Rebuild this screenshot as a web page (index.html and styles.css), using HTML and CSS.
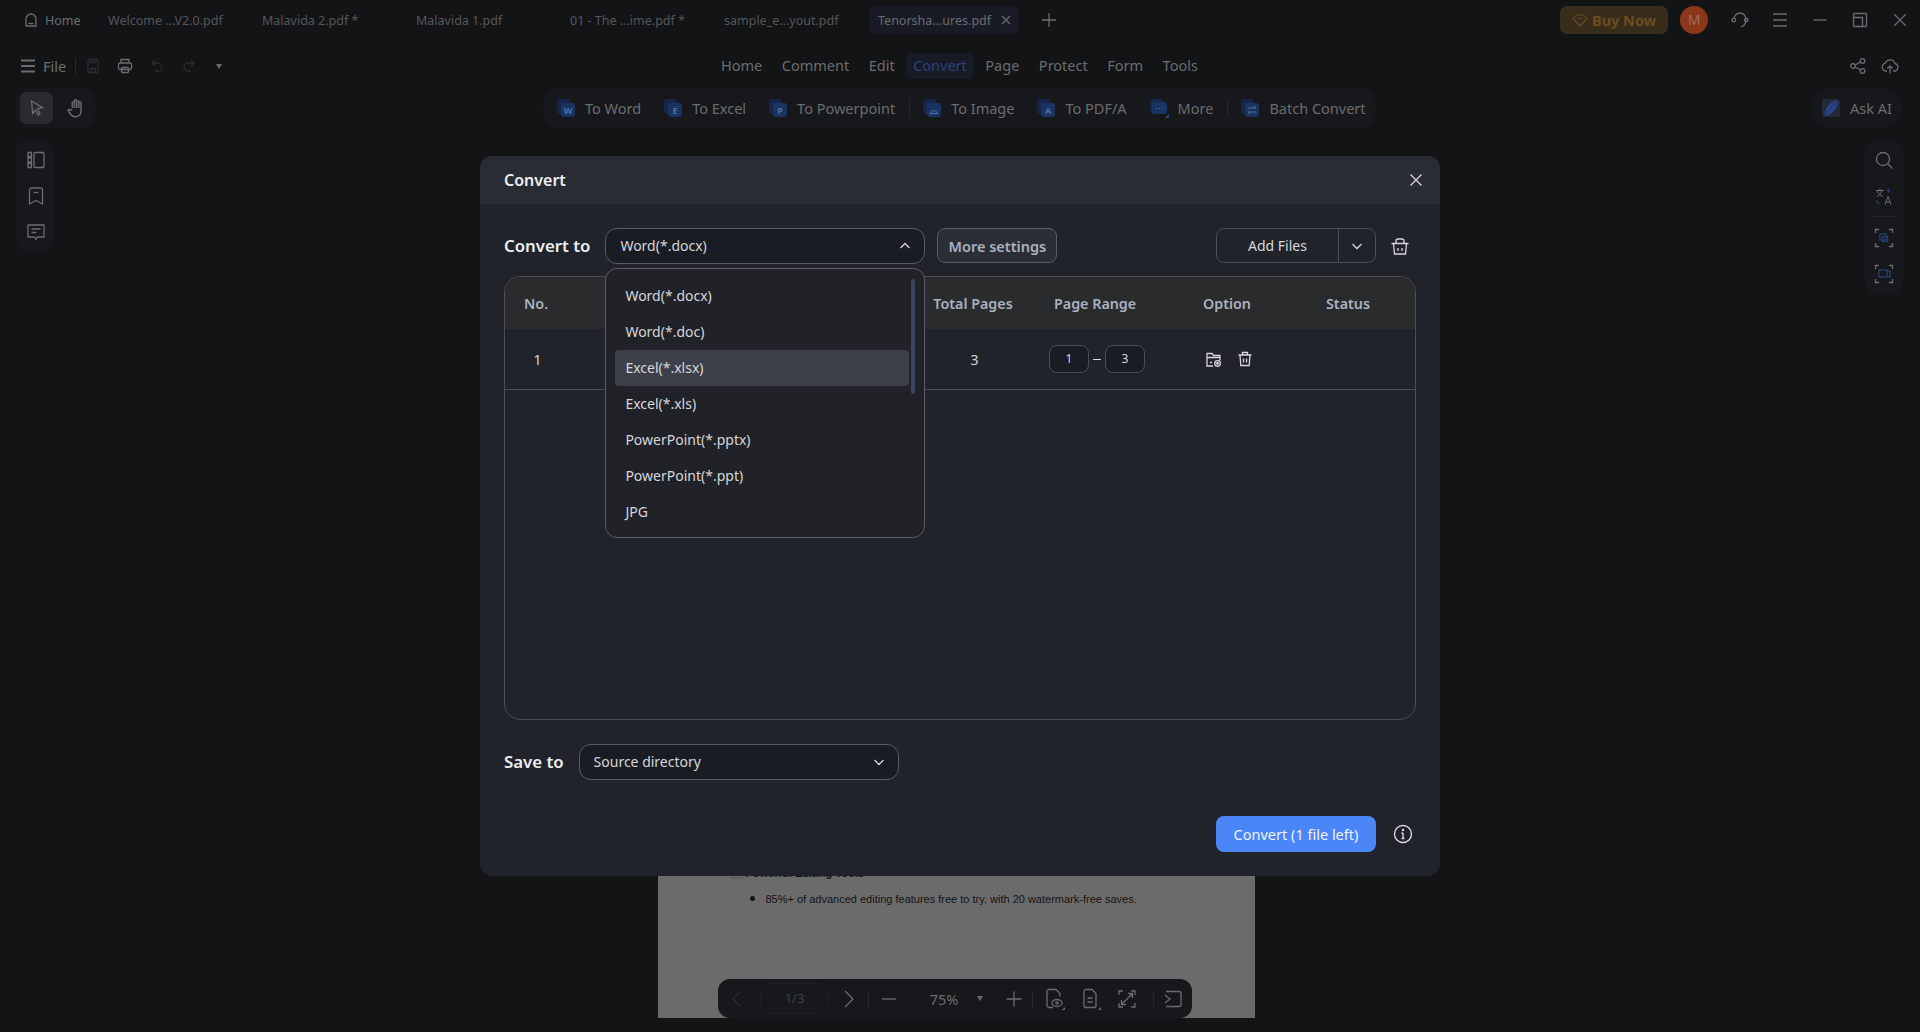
FILE: index.html
```html
<!DOCTYPE html>
<html lang="en">
<head>
  <meta charset="UTF-8">
  <title>Convert - PDNob</title>
  <link rel="stylesheet" href="styles.css">
</head>
<body>
  <!-- tab strip -->
  <div class="tabbar">
    <div class="tab tab-home">
      <svg class="ico" width="16" height="16" viewBox="0 0 16 16"><path d="M3 14V7a5 5 0 0 1 10 0v7z"/><path d="M5.500 11.500h5"/></svg>
      <span>Home</span>
    </div>
    <div class="tab tab-file">Welcome ...V2.0.pdf</div>
    <div class="tab tab-file">Malavida 2.pdf *</div>
    <div class="tab tab-file">Malavida 1.pdf</div>
    <div class="tab tab-file">01 - The ...ime.pdf *</div>
    <div class="tab tab-file tab-short">sample_e...yout.pdf</div>
    <div class="tab tab-active">
      <span>Tenorsha...ures.pdf</span>
      <svg class="ico" width="10" height="10" viewBox="0 0 10 10"><path d="M1 1l8 8M9 1l-8 8"/></svg>
    </div>
    <svg class="ico tab-add" width="16" height="16" viewBox="0 0 16 16"><path d="M8 1v14M1 8h14"/></svg>

    <div class="win-tools">
      <div class="buy-btn">
        <svg width="16" height="16" viewBox="0 0 16 16" fill="none" stroke="#6b4c23" stroke-width="1.200"><path d="M4.500 3h7L15 6.500 8 14 1 6.500z"/><path d="M6 6.500h4"/></svg>
        <span>Buy Now</span>
      </div>
      <div class="avatar">M</div>
      <svg class="ico win-ico" width="20" height="20" viewBox="0 0 20 20"><path d="M4 9a6 6 0 0 1 12 0c0 4-1.500 7-5 8"/><circle cx="3.800" cy="10" r="1.800"/><circle cx="16.200" cy="10" r="1.800"/></svg>
      <svg class="ico win-ico" width="20" height="20" viewBox="0 0 20 20"><path d="M3 4h14M3 10h14M3 16h14"/></svg>
      <svg class="ico win-ico" width="20" height="20" viewBox="0 0 20 20"><path d="M3.500 10h13"/></svg>
      <svg class="ico win-ico" width="20" height="20" viewBox="0 0 20 20"><rect x="3.500" y="3.500" width="13" height="13" rx="1"/><path d="M3.500 7.500h9v9"/></svg>
      <svg class="ico win-ico" width="20" height="20" viewBox="0 0 20 20"><path d="M4 4l12 12M16 4L4 16"/></svg>
    </div>
  </div>

  <!-- menu row -->
  <div class="menubar">
    <div class="file-tools">
      <svg class="ico ico-thick" width="16" height="16" viewBox="0 0 16 16"><path d="M1 2.500h14M1 8h14M1 13.500h14"/></svg>
      <span class="file-label">File</span>
      <i class="vline"></i>
      <svg class="ico ico-off" width="16" height="16" viewBox="0 0 16 16"><rect x="3" y="1.500" width="10" height="13" rx="1.500"/><path d="M5.500 1.500v3h5v-3M5.500 14.500v-4h5v4"/></svg>
      <svg class="ico" width="16" height="16" viewBox="0 0 16 16"><path d="M4 5V1.500h8V5"/><rect x="1.500" y="5" width="13" height="6.500" rx="1.500"/><rect x="4.500" y="9.500" width="7" height="5" rx="1"/></svg>
      <svg class="ico ico-off" width="16" height="16" viewBox="0 0 16 16"><path d="M6 2L3 5l3 3M3 5h6a4 4 0 0 1 0 8H6"/></svg>
      <svg class="ico ico-off" width="16" height="16" viewBox="0 0 16 16"><path d="M10 2l3 3-3 3M13 5H7a4 4 0 0 0 0 8h3"/></svg>
      <span class="caret"></span>
    </div>
    <nav class="main-nav">
      <a>Home</a>
      <a>Comment</a>
      <a>Edit</a>
      <a class="current">Convert</a>
      <a>Page</a>
      <a>Protect</a>
      <a>Form</a>
      <a>Tools</a>
    </nav>
    <div class="share-tools">
      <svg class="ico" width="18" height="18" viewBox="0 0 18 18"><circle cx="4" cy="9" r="2.300"/><circle cx="13.500" cy="4" r="2.300"/><circle cx="13.500" cy="14" r="2.300"/><path d="M6 8l5.500-3M6 10l5.500 3"/></svg>
      <svg class="ico" width="18" height="18" viewBox="0 0 18 18"><path d="M6 14H5a4 4 0 0 1-.6-7.900 5 5 0 0 1 9.500.4A3.800 3.800 0 0 1 13 14h-1"/><path d="M9 16.500V9M6.300 11.500L9 8.800l2.700 2.700"/></svg>
    </div>
  </div>

  <!-- tool row -->
  <div class="toolrow">
    <div class="pointer-tools">
      <div class="tool-btn active">
        <svg class="ico" width="18" height="18" viewBox="0 0 18 18"><path d="M3.500 2l11 6.500-4.800 1.300L12 15l-1.800 1-2.500-5-3 3.500z"/></svg>
      </div>
      <div class="tool-btn">
        <svg class="ico" width="22" height="22" viewBox="-1.500 0 20 20"><path d="M6 10V5.500a1 1 0 0 1 2 0V3.500a1 1 0 0 1 2 0v1a1 1 0 0 1 2 0v1a1 1 0 0 1 2 0V13a5 5 0 0 1-5 5c-3 0-4-1.500-7-6 .8-1 2-1 4 0M8 5.500V10M10 4v6M12 4.500V10"/></svg>
      </div>
    </div>

    <div class="convert-tools">
      <div class="conv-item">
        <svg class="doc-ico" width="20" height="20" viewBox="0 0 20 20"><rect x="1" y="1" width="13" height="15" rx="3" fill="#15264a"/><rect x="5" y="5" width="14" height="14" rx="3" fill="#1a3461"/><text x="12" y="16" class="doc-letter">W</text></svg>
        <span>To Word</span>
      </div>
      <div class="conv-item">
        <svg class="doc-ico" width="20" height="20" viewBox="0 0 20 20"><rect x="1" y="1" width="13" height="15" rx="3" fill="#15264a"/><rect x="5" y="5" width="14" height="14" rx="3" fill="#1a3461"/><text x="12" y="16" class="doc-letter">E</text></svg>
        <span>To Excel</span>
      </div>
      <div class="conv-item">
        <svg class="doc-ico" width="20" height="20" viewBox="0 0 20 20"><rect x="1" y="1" width="13" height="15" rx="3" fill="#15264a"/><rect x="5" y="5" width="14" height="14" rx="3" fill="#1a3461"/><text x="12" y="16" class="doc-letter">P</text></svg>
        <span>To Powerpoint</span>
      </div>
      <i class="vline"></i>
      <div class="conv-item">
        <svg class="doc-ico" width="20" height="20" viewBox="0 0 20 20"><rect x="1" y="1" width="13" height="15" rx="3" fill="#15264a"/><rect x="5" y="5" width="14" height="14" rx="3" fill="#1a3461"/><path d="M7.500 15.500h9M9 15.500a3 3 0 0 1 6 0" fill="none" stroke="#4f6da3" stroke-width="1"/></svg>
        <span>To Image</span>
      </div>
      <div class="conv-item">
        <svg class="doc-ico" width="20" height="20" viewBox="0 0 20 20"><rect x="1" y="1" width="13" height="15" rx="3" fill="#15264a"/><rect x="5" y="5" width="14" height="14" rx="3" fill="#1a3461"/><text x="12" y="16" class="doc-letter">A</text></svg>
        <span>To PDF/A</span>
      </div>
      <div class="conv-item">
        <svg class="doc-ico" width="20" height="20" viewBox="0 0 20 20"><rect x="1" y="1" width="13" height="15" rx="3" fill="#15264a"/><rect x="3" y="4" width="15" height="12" rx="3" fill="#1a3461"/><path d="M7 10.500h1M10 10.500h1M13 10.500h1" stroke="#4f6da3" stroke-width="1.200"/><path d="M20 16v4h-4z" fill="#2b4a80"/></svg>
        <span>More</span>
      </div>
      <i class="vline"></i>
      <div class="conv-item">
        <svg class="doc-ico" width="20" height="20" viewBox="0 0 20 20"><rect x="1" y="1" width="13" height="15" rx="3" fill="#15264a"/><rect x="5" y="5" width="14" height="14" rx="3" fill="#1a3461"/><path d="M8 10h8l-2-2M16 14H8l2 2" fill="none" stroke="#4f6da3" stroke-width="1"/></svg>
        <span>Batch Convert</span>
      </div>
    </div>

    <div class="ask-ai">
      <svg width="22" height="22" viewBox="0 0 22 22"><rect x="2" y="2" width="18" height="18" rx="2" fill="#232a3c"/><path d="M18 3C11 4 5 10 4 19c8-1 14-7 14-16z" fill="#2b4490"/><path d="M4 19L18 3" stroke="#1c2744"/></svg>
      <span>Ask AI</span>
    </div>
  </div>

  <div class="workspace">
    <div class="side-panel side-panel-left">
      <svg class="ico" width="20" height="20" viewBox="0 0 20 20"><path d="M2 2.500h3.500v4H2zM2 8h3.500v4H2zM2 13.500h3.500v4H2z"/><rect x="8" y="2.500" width="10" height="15" rx="1"/></svg>
      <svg class="ico" width="20" height="20" viewBox="0 0 20 20"><path d="M3.500 18V4a2 2 0 0 1 2-2h9a2 2 0 0 1 2 2v14L10 14.500z"/><path d="M7.500 6.500h5"/></svg>
      <svg class="ico" width="20" height="20" viewBox="0 0 20 20"><path d="M2 3h16v12h-6.500L10 17.500 8.500 15H2z"/><path d="M5.500 7h9M5.500 10.500h5"/></svg>
    </div>

    <div class="viewer">
      <div class="pdf-page">
        <div class="pdf-heading">
          <svg width="12" height="12" viewBox="0 0 12 12" fill="none" stroke="#555" stroke-width="1"><rect x="1" y="1" width="10" height="10"/></svg>
          <span>Powerful Editing Tools</span>
        </div>
        <ul class="pdf-list">
          <li>85%+ of advanced editing features free to try, with 20 watermark-free saves.</li>
        </ul>
      </div>

      <div class="page-toolbar">
        <svg class="ico ico-off" width="14" height="20" viewBox="0 0 14 20"><path d="M11 2L3 10l8 8"/></svg>
        <div class="page-input">1/3</div>
        <svg class="ico" width="14" height="20" viewBox="0 0 14 20"><path d="M3 2l8 8-8 8"/></svg>
        <i class="vline"></i>
        <svg class="ico" width="16" height="16" viewBox="0 0 16 16"><path d="M1 8h14"/></svg>
        <span class="zoom-val">75%</span>
        <span class="caret"></span>
        <svg class="ico" width="18" height="18" viewBox="0 0 18 18"><path d="M9 1.500v15M1.500 9h15"/></svg>
        <i class="vline vline-view"></i>
        <svg class="ico view-ico" width="20" height="22" viewBox="0 0 20 22"><path d="M8 19.500H4a2 2 0 0 1-2-2v-14a2 2 0 0 1 2-2h7l4 4v3"/><ellipse cx="12" cy="15" rx="5" ry="3.500"/><circle cx="12" cy="15" r="1.200"/><path d="M20 19v3h-3z" fill="#6b6c6f" stroke="none"/></svg>
        <svg class="ico view-ico" width="20" height="22" viewBox="0 0 20 22"><path d="M3 3.500a2 2 0 0 1 2-2h6l4 4v12a2 2 0 0 1-2 2H5a2 2 0 0 1-2-2z"/><path d="M6.500 10h5M6.500 14h5"/><path d="M20 19v3h-3z" fill="#6b6c6f" stroke="none"/></svg>
        <svg class="ico view-ico" width="20" height="20" viewBox="0 0 20 20"><path d="M2 6V2h4M14 2h4v4M18 14v4h-4M6 18H2v-4M5 15L15 5M11 4.500h4.500V9M9 15.500H4.500V11"/></svg>
        <i class="vline vline-last"></i>
        <svg class="ico" width="20" height="20" viewBox="0 0 20 20"><path d="M3 2.500h13a2 2 0 0 1 2 2v11a2 2 0 0 1-2 2H3"/><path d="M2 6l5 4-5 4"/></svg>
      </div>
    </div>

    <div class="side-panel side-panel-right">
      <svg class="ico" width="20" height="20" viewBox="0 0 20 20"><circle cx="9" cy="9" r="6.500"/><path d="M14 14l4.500 4.500"/></svg>
      <svg width="20" height="20" viewBox="0 0 20 20" fill="none" stroke="#6b6c6f" stroke-width="1"><path d="M2 4.500h8M6 2.500v2M3 10.500c2.500-1 4-3 4.500-6M3.500 5c1 2.500 3 4.500 5.500 5.500M11 18.500l3-8 3 8M12 16h4"/><path d="M14.500 2l1.500 2.500-1.500 2.500-1.500-2.500z" fill="#25406f" stroke="none"/><path d="M3 14v3h3" stroke="#25406f"/></svg>
      <i class="hline"></i>
      <svg width="20" height="20" viewBox="0 0 20 20" fill="none" stroke="#6b6c6f" stroke-width="1.300"><path d="M1.500 5V1.500H5M15 1.500h3.500V5M18.500 15v3.500H15M5 18.500H1.500V15"/><rect x="6" y="6" width="6" height="6" stroke="#25406f"/><rect x="8.500" y="8.500" width="5" height="5" stroke="#25406f"/></svg>
      <svg width="20" height="20" viewBox="0 0 20 20" fill="none" stroke="#6b6c6f" stroke-width="1.300"><path d="M1.500 5V1.500H5M15 1.500h3.500V5M18.500 15v3.500H15M5 18.500H1.500V15"/><rect x="5" y="6" width="8" height="7" stroke="#25406f"/><path d="M13 8l3-1v6l-3-1" stroke="#25406f"/></svg>
    </div>
  </div>

  <!-- convert dialog -->
  <div class="dialog">
    <div class="dialog-head">
      <h2>Convert</h2>
      <svg class="ico-light" width="14" height="14" viewBox="0 0 14 14"><path d="M1.500 1.500l11 11M12.500 1.500l-11 11"/></svg>
    </div>

    <div class="dialog-body">
      <div class="convert-row">
        <label class="field-label">Convert to</label>
        <div class="select-wrap">
          <div class="select">
            <span>Word(*.docx)</span>
            <svg class="ico-light" width="12" height="12" viewBox="0 0 12 12"><path d="M1.500 8L6 3.500 10.500 8"/></svg>
          </div>
          <div class="dropdown">
            <ul class="dropdown-list">
              <li>Word(*.docx)</li>
              <li>Word(*.doc)</li>
              <li class="hover">Excel(*.xlsx)</li>
              <li>Excel(*.xls)</li>
              <li>PowerPoint(*.pptx)</li>
              <li>PowerPoint(*.ppt)</li>
              <li>JPG</li>
            </ul>
            <div class="scroll-thumb"></div>
          </div>
        </div>
        <button class="more-btn">More settings</button>
        <div class="add-files">
          <span class="add-label">Add Files</span>
          <span class="add-arrow">
            <svg class="ico-light" width="12" height="12" viewBox="0 0 12 12"><path d="M1.500 4L6 8.500 10.500 4"/></svg>
          </span>
        </div>
        <svg class="ico-light clear-all" width="20" height="20" viewBox="0 0 20 20"><path d="M1.500 7.500h17M3.500 7.500l1 10.500h11l1-10.500M6 7.500V5a2 2 0 0 1 2-2h4a2 2 0 0 1 2 2v2.500M8 12v3M12 12v3"/></svg>
      </div>

      <div class="file-table">
        <div class="table-row table-head">
          <div>No.</div>
          <div></div>
          <div>Total Pages</div>
          <div class="head-range">Page Range</div>
          <div class="head-option">Option</div>
          <div class="head-status">Status</div>
        </div>
        <div class="table-row table-item">
          <div class="cell-no">1</div>
          <div></div>
          <div class="cell-pages">3</div>
          <div class="page-range">
            <span class="range-box">1</span>
            <span class="range-dash"></span>
            <span class="range-box">3</span>
          </div>
          <div class="cell-option">
            <svg class="ico-light" width="17" height="17" viewBox="0 0 17 17"><path d="M8 15H2V2.500h5l1.500 2H15v5"/><path d="M2 6.500h13M5 11.500h2"/><circle cx="12.500" cy="12.500" r="2.800"/><circle cx="12.500" cy="12.500" r=".8"/></svg>
            <svg class="ico-light" width="16" height="16" viewBox="0 0 16 16"><path d="M1.500 4h13M3 4l.8 10.500h8.400L13 4M5.500 4V1.500h5V4M6.500 7.500v4M9.500 7.500v4"/></svg>
          </div>
          <div></div>
        </div>
      </div>

      <div class="save-row">
        <label class="field-label">Save to</label>
        <div class="select select-save">
          <span>Source directory</span>
          <svg class="ico-light" width="12" height="12" viewBox="0 0 12 12"><path d="M1.500 4L6 8.500 10.500 4"/></svg>
        </div>
      </div>

      <div class="action-row">
        <button class="convert-btn">Convert (1 file left)</button>
        <svg class="ico-light" width="20" height="20" viewBox="0 0 20 20"><circle cx="10" cy="10" r="8.500" stroke-width="1.400"/><path d="M10 9v5.500M8.500 14.500h3M8.500 9H10" stroke-width="1.400"/><circle cx="10" cy="6" r=".6"/></svg>
      </div>
    </div>
  </div>
</body>
</html>
```

FILE: styles.css
```css
* {
  box-sizing: border-box;
}
body {
  margin: 0;
  height: 1032px;
  overflow: hidden;
  display: flex;
  flex-direction: column;
  background: #131416;
  color: #6b6c6f;
  font-family: "Noto Sans", "Liberation Sans", sans-serif;
  font-size: 14px;
}
svg {
  flex: none;
  display: block;
}
.ico {
  fill: none;
  stroke: #6b6c6f;
  stroke-width: 1.3;
}
.ico-thick {
  stroke-width: 1.8;
}
.ico-off {
  stroke: #2b2c2f;
}
.ico-light {
  fill: none;
  stroke: #d5d7dc;
  stroke-width: 1.3;
}
.vline {
  display: block;
  flex: none;
  width: 1px;
  height: 16px;
  background: #27282b;
}
.hline {
  display: block;
  width: 24px;
  height: 1px;
  background: #27282b;
}
.caret {
  width: 0;
  height: 0;
  border-left: 3.500px solid transparent;
  border-right: 3.500px solid transparent;
  border-top: 5px solid #6b6c6f;
}

/* tabs */
.tabbar {
  display: flex;
  align-items: center;
  height: 46px;
  padding: 6px 10px 12px 23px;
  font-size: 12.500px;
}
.tab {
  display: flex;
  align-items: center;
  height: 28px;
}
.tab-home {
  gap: 6px;
  width: 85px;
}
.tab-file {
  width: 154px;
  color: #55565a;
}
.tab-short {
  width: 145px;
}
.tab-active {
  width: 150px;
  padding: 0 8px 0 9px;
  justify-content: space-between;
  background: #181b26;
  border-radius: 7px;
}
.tab-add {
  margin-left: 22px;
}
.win-tools {
  display: flex;
  align-items: center;
  margin-left: auto;
}
.buy-btn {
  display: flex;
  align-items: center;
  gap: 4px;
  width: 108px;
  height: 28px;
  padding-left: 12px;
  background: #382c1b;
  border-radius: 7px;
  color: #6b4c23;
  font-size: 14.500px;
  font-weight: 700;
}
.avatar {
  width: 28px;
  height: 28px;
  margin: 0 22px 0 12px;
  border-radius: 50%;
  background: #8a3618;
  color: #a0705c;
  font-size: 14px;
  line-height: 28px;
  text-align: center;
}
.win-ico {
  margin-right: 20px;
}
.win-ico:last-child {
  margin-right: 0;
}

/* menu row */
.menubar {
  display: flex;
  align-items: center;
  height: 40px;
  padding: 0 21px 0 20px;
}
.file-tools {
  display: flex;
  align-items: center;
  width: 693px;
}
.file-label {
  margin: 0 9px 0 7px;
  font-size: 14.500px;
}
.file-tools .ico {
  margin-right: 16px;
}
.file-tools .ico-thick {
  margin-right: 0;
}
.file-tools .vline {
  margin-right: 9px;
}
.file-tools .caret {
  margin-left: 3px;
}
.main-nav {
  display: flex;
  align-items: center;
}
.main-nav a {
  margin-right: 3.500px;
  padding: 2px 8px 4px;
  font-size: 14.500px;
  line-height: 20px;
}
.main-nav a.current {
  padding: 2px 7px 4px;
  background: #171b28;
  border-radius: 6px;
  color: #2a4477;
}
.share-tools {
  display: flex;
  gap: 14px;
  margin-left: auto;
}

/* tool row */
.toolrow {
  display: flex;
  align-items: center;
  height: 40px;
  margin-top: 2px;
  padding: 0 18px 0 16px;
}
.pointer-tools {
  display: flex;
  align-items: center;
  gap: 5px;
  width: 79px;
  height: 40px;
  padding: 0 4px;
  background: #17181b;
  border-radius: 12px;
}
.tool-btn {
  display: flex;
  align-items: center;
  justify-content: center;
  width: 34px;
  height: 32px;
  border-radius: 7px;
}
.tool-btn.active {
  background: #2a2b2e;
}
.convert-tools {
  display: flex;
  align-items: center;
  width: 832px;
  height: 40px;
  margin-left: 448px;
  padding-left: 13px;
  background: #17181b;
  border-radius: 12px;
}
.conv-item {
  display: flex;
  align-items: center;
  gap: 9px;
  margin-right: 22px;
  font-size: 14.500px;
  white-space: nowrap;
}
.convert-tools .vline {
  margin-right: 12px;
  margin-left: -8px;
}
.doc-letter {
  fill: #4f6da3;
  font-size: 9px;
  font-weight: 700;
  text-anchor: middle;
}
.ask-ai {
  display: flex;
  align-items: center;
  gap: 8px;
  width: 91px;
  height: 40px;
  margin-left: auto;
  padding-left: 9px;
  background: #17181b;
  border-radius: 20px;
  font-size: 14.500px;
}

/* workspace */
.workspace {
  flex: 1;
  display: flex;
  align-items: flex-start;
  padding: 12px 17px 14px 16px;
}
.side-panel {
  display: flex;
  flex-direction: column;
  align-items: center;
  gap: 16px;
  flex: none;
  width: 38px;
  padding: 10px 0;
  background: #17181b;
  border-radius: 12px;
}
.side-panel-left {
  padding-left: 2px;
}
.side-panel-right .hline {
  margin: -6px 0 -5px;
}
.viewer {
  position: relative;
  flex: 1;
  align-self: stretch;
  display: flex;
  justify-content: center;
  align-items: flex-end;
  padding-right: 7px;
}
.pdf-page {
  display: flex;
  flex-direction: column;
  justify-content: flex-end;
  width: 597px;
  height: 300px;
  padding: 0 0 113px 73px;
  background: #6b6b6b;
  color: #141414;
  font-family: "Liberation Sans", sans-serif;
  font-size: 11px;
}
.pdf-heading {
  display: flex;
  align-items: center;
  gap: 3px;
  font-size: 11px;
  font-weight: 700;
}
.pdf-list {
  margin: 10px 0 0;
  padding-left: 35px;
}
.pdf-list li::marker {
  font-size: 15px;
}
.page-toolbar {
  position: absolute;
  bottom: 0;
  left: 664px;
  display: flex;
  align-items: center;
  width: 474px;
  height: 39px;
  padding-left: 12px;
  background: #17181b;
  border-radius: 12px;
}
.page-input {
  width: 69px;
  height: 31px;
  margin: 0 13px 0 16px;
  border: 1px solid #1f2023;
  border-radius: 12px;
  font-size: 13px;
  color: #3f4043;
  line-height: 29px;
  text-align: center;
}
.page-toolbar .vline {
  margin: 0 12px;
}
.page-toolbar .vline-view {
  margin: 0 12px 0 9px;
}
.page-toolbar .vline-last {
  margin: 0 9px 0 0;
}
.zoom-val {
  width: 62px;
  margin-left: 16px;
  font-size: 14.500px;
  text-align: center;
}
.page-toolbar .caret {
  margin: 0 22px 0 2px;
}
.view-ico {
  margin-right: 16px;
}

/* dialog */
.dialog {
  position: absolute;
  left: 480px;
  top: 156px;
  width: 960px;
  height: 720px;
  background: #21232b;
  border-radius: 12px;
  color: #d5d7dc;
}
.dialog-head {
  display: flex;
  align-items: center;
  justify-content: space-between;
  height: 48px;
  padding: 0 17px 0 24px;
  background: #2a2c34;
  border-radius: 12px 12px 0 0;
}
.dialog-head h2 {
  margin: 0;
  font-size: 16px;
  font-weight: 600;
  color: #eceef1;
}
.dialog-body {
  display: flex;
  flex-direction: column;
  padding: 24px 24px 0;
}
.convert-row {
  display: flex;
  align-items: center;
  height: 35px;
}
.field-label {
  font-size: 16.800px;
  font-weight: 600;
  color: #eceef1;
}
.select-wrap {
  position: relative;
  width: 320px;
  margin-left: 15px;
}
.select {
  display: flex;
  align-items: center;
  justify-content: space-between;
  height: 36px;
  padding: 0 13px 0 14px;
  background: #1a1c23;
  border: 1px solid #5a5c64;
  border-radius: 12px;
  font-size: 14px;
}
.dropdown {
  position: absolute;
  top: 40px;
  left: 0;
  z-index: 2;
  width: 320px;
  height: 270px;
  padding: 9px;
  background: #212227;
  border: 1px solid #5a5c64;
  border-radius: 12px;
}
.dropdown-list {
  margin: 0;
  padding: 0;
  list-style: none;
  width: 294px;
}
.dropdown-list li {
  height: 36px;
  padding-left: 10px;
  border-radius: 4px;
  line-height: 36px;
}
.dropdown-list li.hover {
  background: #3e4049;
}
.scroll-thumb {
  position: absolute;
  top: 10px;
  left: 305px;
  width: 4px;
  height: 115px;
  background: #394260;
  border-radius: 2px;
}
.more-btn {
  width: 120px;
  height: 35px;
  margin-left: 12px;
  padding: 0;
  background: #2c2e36;
  border: 1px solid #5a5c64;
  border-radius: 8px;
  color: #a9b2c0;
  font-family: inherit;
  font-size: 14.500px;
  font-weight: 600;
}
.add-files {
  display: flex;
  align-items: center;
  width: 160px;
  height: 35px;
  margin-left: auto;
  border: 1px solid #4b4d55;
  border-radius: 8px;
}
.add-label {
  flex: 1;
  text-align: center;
}
.add-arrow {
  display: flex;
  align-items: center;
  justify-content: center;
  width: 37px;
  height: 100%;
  border-left: 1px solid #4b4d55;
}
.clear-all {
  margin: 0 6px 0 14px;
}
.file-table {
  height: 444px;
  margin-top: 13px;
  border: 1px solid #4b4d55;
  border-radius: 16px;
  overflow: hidden;
}
.table-row {
  display: grid;
  grid-template-columns: 65px 355px 96px 164px 124px 1fr;
  align-items: center;
}
.table-head {
  height: 52px;
  background: #292b2c;
  color: #a9b2c0;
  font-size: 14.300px;
  font-weight: 600;
}
.table-head > div:first-child {
  padding-left: 19px;
}
.table-head > div:nth-child(3) {
  text-align: center;
  white-space: nowrap;
}
.head-range {
  padding-left: 33px;
}
.head-option {
  padding-left: 18px;
}
.head-status {
  padding-left: 17px;
}
.table-item {
  height: 61px;
  border-bottom: 1px solid #4b4d55;
}
.cell-no, .cell-pages {
  text-align: center;
}
.cell-pages {
  padding-left: 3px;
}
.page-range {
  display: flex;
  align-items: center;
  padding-left: 28px;
}
.range-box {
  width: 40px;
  height: 28px;
  border: 1px solid #4b4d55;
  border-radius: 8px;
  background: #1a1c23;
  font-size: 12px;
  line-height: 26px;
  text-align: center;
}
.range-dash {
  width: 8px;
  height: 1px;
  margin: 0 4px 0 4px;
  background: #d5d7dc;
}
.cell-option {
  display: flex;
  align-items: center;
  gap: 15px;
  padding-left: 20px;
}
.save-row {
  display: flex;
  align-items: center;
  gap: 15px;
  margin-top: 24px;
}
.save-row .field-label {
  padding-bottom: 1px;
}
.select-save {
  width: 320px;
  padding-bottom: 1px;
}
.action-row {
  display: flex;
  align-items: center;
  justify-content: flex-end;
  gap: 17px;
  margin-top: 36px;
  padding-right: 3px;
}
.convert-btn {
  width: 160px;
  height: 36px;
  padding: 0;
  background: #4a86f7;
  border: 0;
  border-radius: 8px;
  color: #eef3fe;
  font-family: inherit;
  font-size: 14.500px;
}
```
